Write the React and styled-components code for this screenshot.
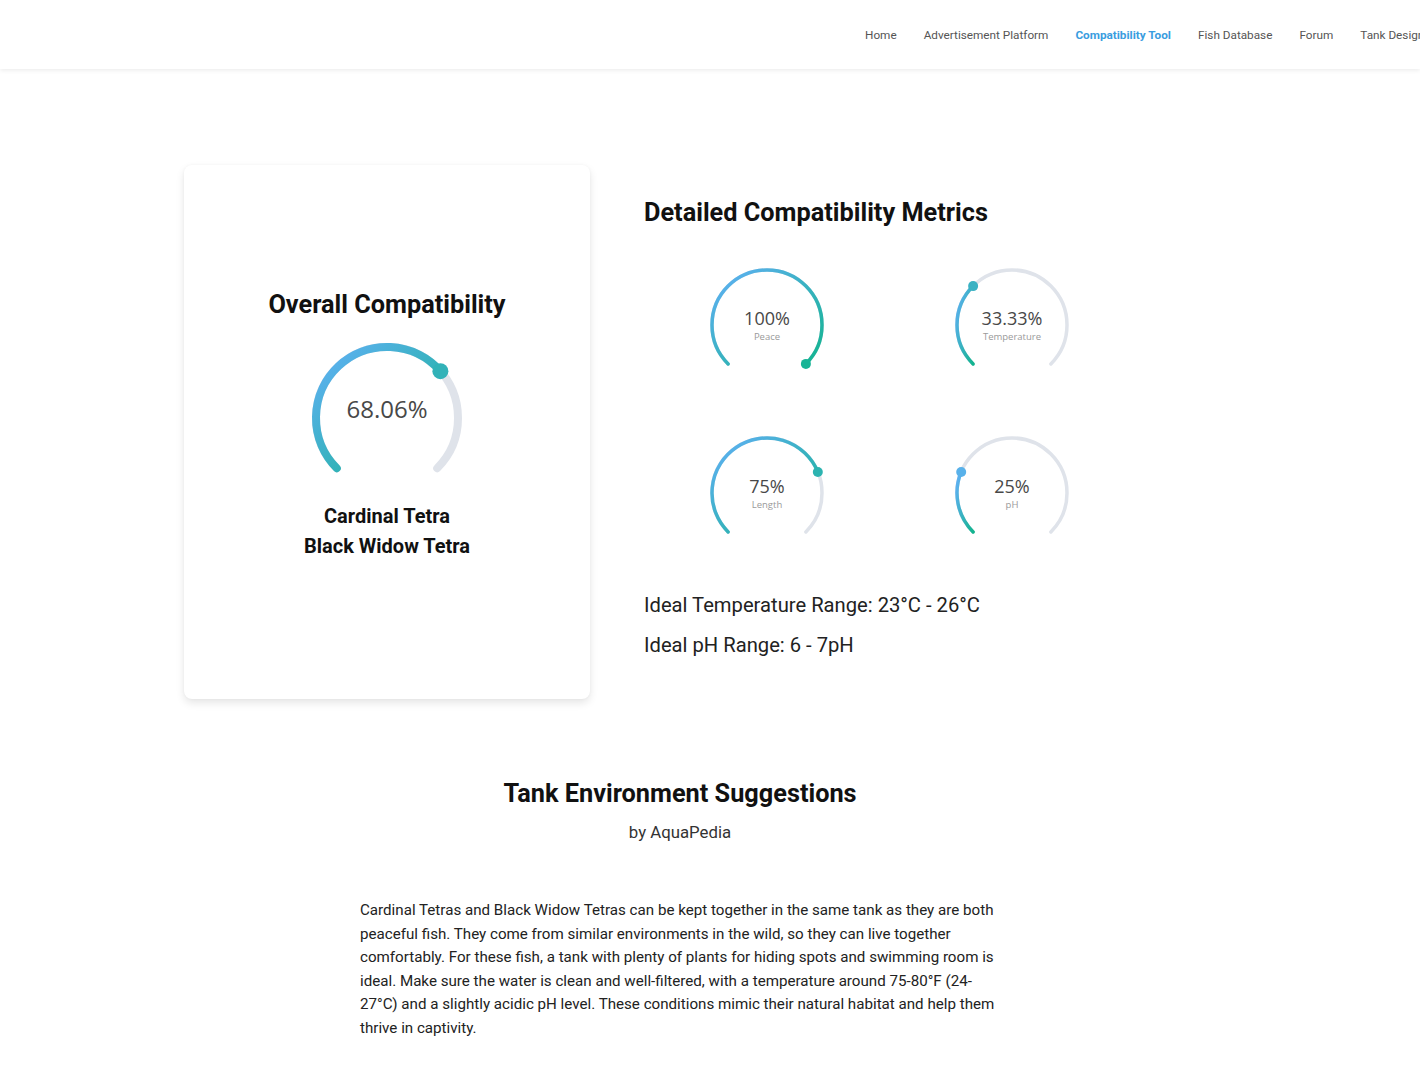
import React from 'react';
import styled, { createGlobalStyle } from 'styled-components';

const GlobalStyle = createGlobalStyle`
  body {
    margin: 0;
    background: #fff;
    font-family: Roboto, "Liberation Sans", sans-serif;
    color: #111;
  }
`;

const Header = styled.header`
  height: 69px;
  display: flex;
  align-items: center;
  background: #fff;
  box-shadow: 0 1px 5px rgba(0, 0, 0, 0.09);
  overflow: hidden;
`;

const Brand = styled.div`
  width: 865px;
  flex-shrink: 0;
`;

const Nav = styled.nav`
  display: flex;
  gap: 27px;
  flex-shrink: 0;
`;

const NavLink = styled.a`
  font-size: 11.75px;
  white-space: nowrap;
  color: ${(props) => (props.active ? '#3a9de0' : '#555')};
  font-weight: ${(props) => (props.active ? 700 : 400)};
  text-decoration: none;
  cursor: pointer;
`;

const Main = styled.main`
  padding-top: 96px;
  padding-bottom: 40px;
`;

const Results = styled.section`
  display: flex;
  justify-content: center;
  gap: 54px;
`;

const Card = styled.div`
  width: 406px;
  height: 534px;
  box-sizing: border-box;
  padding-bottom: 12px;
  border-radius: 8px;
  background: #fff;
  box-shadow: 0 4px 9px rgba(0, 0, 0, 0.1), 0 0 3px rgba(0, 0, 0, 0.04);
  display: flex;
  flex-direction: column;
  align-items: center;
  justify-content: center;
`;

const CardTitle = styled.h2`
  margin: 0 0 19px;
  font-size: 25.3px;
  line-height: 28px;
  font-weight: 700;
`;

const FishNames = styled.div`
  margin-top: 23px;
  text-align: center;
  font-size: 20px;
  line-height: 30px;
  font-weight: 700;
`;

const Metrics = styled.div`
  width: 592px;
  padding-top: 34px;
`;

const MetricsTitle = styled.h2`
  margin: 0;
  font-size: 25.3px;
  line-height: 28px;
  font-weight: 700;
`;

const GaugeGrid = styled.div`
  display: grid;
  grid-template-columns: 245px 245px;
  row-gap: 53px;
  justify-items: center;
  margin-top: 38px;
`;

const Ranges = styled.div`
  margin-top: 45px;
  display: flex;
  flex-direction: column;
  gap: 16px;
`;

const RangeText = styled.p`
  margin: 0;
  font-size: 20.2px;
  line-height: 24px;
  color: #222;
`;

const Suggestions = styled.section`
  margin-top: 79px;
  padding-right: 60px;
  display: flex;
  flex-direction: column;
  align-items: center;
`;

const SuggestTitle = styled.h2`
  margin: 0;
  font-size: 25.3px;
  line-height: 32px;
  font-weight: 700;
`;

const Byline = styled.div`
  margin-top: 12px;
  font-size: 16.8px;
  line-height: 21px;
  color: #333;
`;

const Paragraph = styled.p`
  margin: 56px 0 0;
  width: 640px;
  font-size: 15.15px;
  line-height: 23.5px;
  color: #222;
`;

const ValueText = styled.text`
  font-family: "Open Sans", "DejaVu Sans", sans-serif;
  fill: #484848;
`;

const LabelText = styled.text`
  font-family: "Open Sans", "DejaVu Sans", sans-serif;
  fill: #9a9a9a;
`;

const START = '#62b0f8';
const END = '#12b48e';

const mix = (a, b, t) => {
  const pa = [1, 3, 5].map((i) => parseInt(a.slice(i, i + 2), 16));
  const pb = [1, 3, 5].map((i) => parseInt(b.slice(i, i + 2), 16));
  const c = pa.map((v, i) => Math.round(v + (pb[i] - v) * t));
  return `rgb(${c.join(',')})`;
};

const pt = (cx, cy, r, deg) => {
  const a = (deg * Math.PI) / 180;
  return [cx + r * Math.cos(a), cy + r * Math.sin(a)];
};

const arcPath = (cx, cy, r, from, to) => {
  const [x1, y1] = pt(cx, cy, r, from);
  const [x2, y2] = pt(cx, cy, r, to);
  const large = to - from > 180 ? 1 : 0;
  return `M ${x1} ${y1} A ${r} ${r} 0 ${large} 1 ${x2} ${y2}`;
};

let gid = 0;

const Gauge = ({ value, label, width, height, cy, r, stroke, dot, valueSize, labelSize, valueY }) => {
  const id = `g${gid++}`;
  const cx = width / 2;
  const end = 135 + 270 * value;
  // bbox of the progress arc, so the dot takes the gradient colour it sits on
  const xs = [];
  const ys = [];
  for (let d = 135; d <= end; d += 1) {
    const [x, y] = pt(cx, cy, r, d);
    xs.push(x);
    ys.push(y);
  }
  const [ex, ey] = pt(cx, cy, r, end);
  xs.push(ex);
  ys.push(ey);
  const minX = Math.min(...xs);
  const minY = Math.min(...ys);
  const w = Math.max(...xs) - minX || 1;
  const h = Math.max(...ys) - minY || 1;
  const t = ((ex - minX) / w + (ey - minY) / h) / 2;

  return (
    <svg width={width} height={height} viewBox={`0 0 ${width} ${height}`}>
      <defs>
        <linearGradient id={id} x1="0" y1="0" x2="1" y2="1">
          <stop offset="0%" stopColor={START} />
          <stop offset="100%" stopColor={END} />
        </linearGradient>
      </defs>
      <path d={arcPath(cx, cy, r, 135, 405)} fill="none" stroke="#dfe3ea" strokeWidth={stroke} strokeLinecap="round" />
      <path d={arcPath(cx, cy, r, 135, end)} fill="none" stroke={`url(#${id})`} strokeWidth={stroke} strokeLinecap="round" />
      <circle cx={ex} cy={ey} r={dot} fill={mix(START, END, t)} />
      <ValueText x={cx} y={valueY} textAnchor="middle" dominantBaseline="middle" fontSize={valueSize}>
        {value === 1 ? '100%' : `${(value * 100).toFixed(2).replace(/\.00$/, '')}%`}
      </ValueText>
      {label && (
        <LabelText x={cx} y={valueY + 17} textAnchor="middle" dominantBaseline="middle" fontSize={labelSize}>
          {label}
        </LabelText>
      )}
    </svg>
  );
};

const metrics = [
  { label: 'Peace', value: 1 },
  { label: 'Temperature', value: 1 / 3 },
  { label: 'Length', value: 0.75 },
  { label: 'pH', value: 0.25 }
];

const navItems = ['Home', 'Advertisement Platform', 'Compatibility Tool', 'Fish Database', 'Forum', 'Tank Design'];

export default function App() {
  return (
    <>
      <GlobalStyle />
      <Header>
        <Brand />
        <Nav>
          {navItems.map((n) => (
            <NavLink key={n} active={n === 'Compatibility Tool'}>
              {n}
            </NavLink>
          ))}
        </Nav>
      </Header>
      <Main>
        <Results>
          <Card>
            <CardTitle>Overall Compatibility</CardTitle>
            <Gauge
              value={0.6806}
              width={160}
              height={140}
              cy={80}
              r={71}
              stroke={8}
              dot={8}
              valueSize={24}
              valueY={74}
            />
            <FishNames>
              Cardinal Tetra
              <br />
              Black Widow Tetra
            </FishNames>
          </Card>
          <Metrics>
            <MetricsTitle>Detailed Compatibility Metrics</MetricsTitle>
            <GaugeGrid>
              {metrics.map((m) => (
                <Gauge
                  key={m.label}
                  value={m.value}
                  label={m.label}
                  width={130}
                  height={115}
                  cy={60}
                  r={55}
                  stroke={3.5}
                  dot={5}
                  valueSize={18}
                  labelSize={9.5}
                  valueY={55}
                />
              ))}
            </GaugeGrid>
            <Ranges>
              <RangeText>Ideal Temperature Range: 23°C - 26°C</RangeText>
              <RangeText>Ideal pH Range: 6 - 7pH</RangeText>
            </Ranges>
          </Metrics>
        </Results>
        <Suggestions>
          <SuggestTitle>Tank Environment Suggestions</SuggestTitle>
          <Byline>by AquaPedia</Byline>
          <Paragraph>
            Cardinal Tetras and Black Widow Tetras can be kept together in the same tank as they are both
            peaceful fish. They come from similar environments in the wild, so they can live together
            comfortably. For these fish, a tank with plenty of plants for hiding spots and swimming room is
            ideal. Make sure the water is clean and well-filtered, with a temperature around 75-80°F (24-27°C)
            and a slightly acidic pH level. These conditions mimic their natural habitat and help them thrive
            in captivity.
          </Paragraph>
        </Suggestions>
      </Main>
    </>
  );
}
